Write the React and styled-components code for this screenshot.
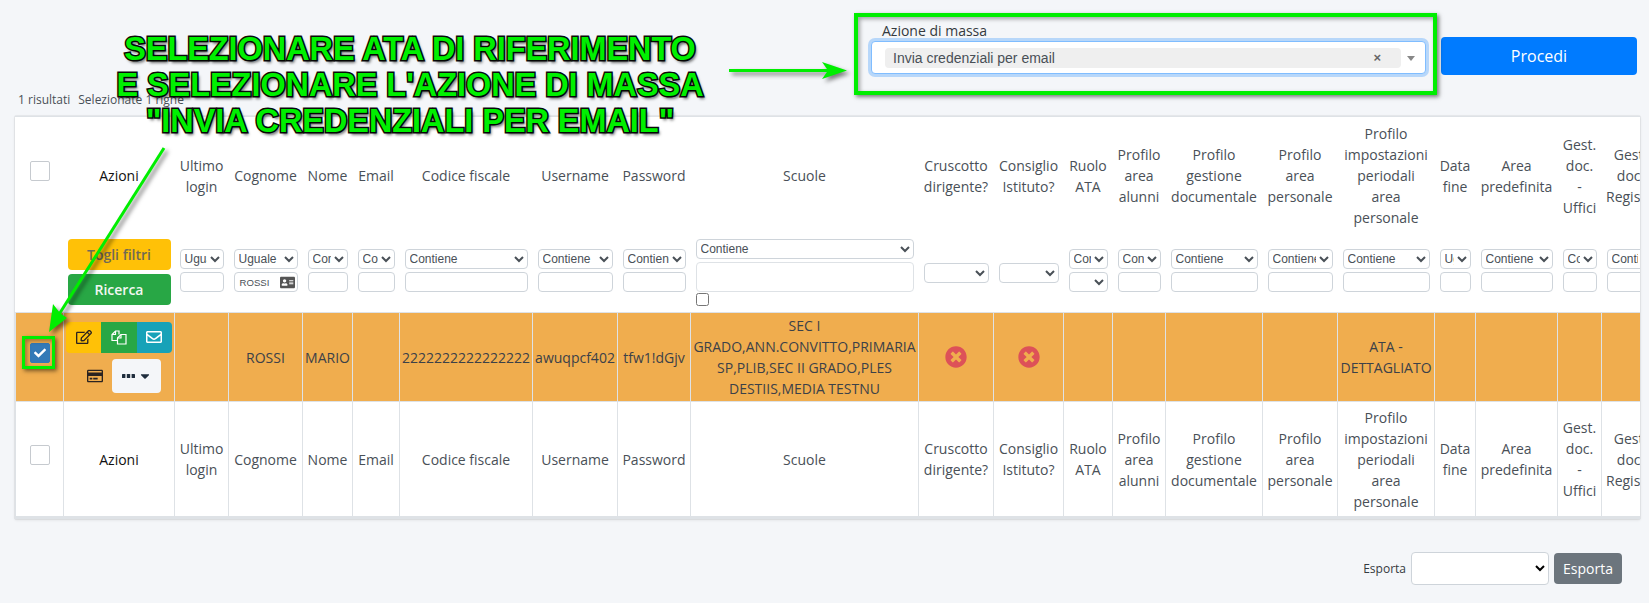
import React from 'react';
import styled, { createGlobalStyle } from 'styled-components';
import {
  FaRegEdit, FaRegEnvelope, FaRegCreditCard, FaCaretDown,
  FaCheck, FaTimesCircle, FaAddressCard,
} from 'react-icons/fa';

const GlobalStyle = createGlobalStyle`
  html, body {
    margin: 0;
    padding: 0;
    background: #f4f6f9;
  }
  body {
    font-family: "Open Sans", "Noto Sans", sans-serif;
    font-size: 14px;
    color: #495057;
  }
`;

const Page = styled.div`
  position: relative;
  width: 1649px;
  height: 603px;
  overflow: hidden;
`;

const MassBar = styled.div`
  display: flex;
  justify-content: flex-end;
  align-items: flex-end;
  gap: 15px;
  padding: 21px 12px 0 0;
`;

const MassField = styled.div`
  width: 555px;
`;

const MassLabel = styled.div`
  margin-left: 11px;
  line-height: 20px;
  color: #343a40;
`;

const MassSelect = styled.div`
  display: flex;
  align-items: center;
  height: 33px;
  box-sizing: border-box;
  padding: 0 10px 0 13px;
  background: #fff;
  border: 1px solid #80bdff;
  border-radius: 4px;
  box-shadow: 0 0 0 3px rgba(0, 123, 255, 0.25);
  font-family: "Liberation Sans", Arial, sans-serif;
  color: #495057;
`;

const Chip = styled.div`
  flex: 1;
  display: flex;
  justify-content: space-between;
  align-items: center;
  height: 20px;
  padding: 0 20px 0 8px;
  background: #efefef;
  border-radius: 4px;
`;

const ChipClose = styled.span`
  font-size: 13px;
  font-weight: 700;
  color: #666;
`;

const SelectCaret = styled.span`
  width: 0;
  height: 0;
  margin: 2px 0 0 6px;
  border-left: 4px solid transparent;
  border-right: 4px solid transparent;
  border-top: 5px solid #888;
`;

const ProceedButton = styled.button`
  width: 196px;
  height: 38px;
  margin-bottom: -1px;
  background: #007bff;
  border: 0;
  border-radius: 4px;
  color: #fff;
  font: 400 16px "Open Sans", sans-serif;
`;

const ResultLine = styled.div`
  display: flex;
  gap: 8px;
  margin: 17px 0 0 18px;
  font-size: 12px;
  line-height: 18px;
  height: 18px;
  color: #495057;
`;

const TableCard = styled.div`
  margin: 7px 9px 0 15px;
  overflow: hidden;
  background: #fff;
  border-top: 1px solid #dee2e6;
  border-bottom: 2px solid #dee2e6;
  box-shadow: 0 0 1px rgba(0, 0, 0, 0.25), 0 1px 3px rgba(0, 0, 0, 0.1);
`;

const Grid = styled.table`
  width: 1644px;
  table-layout: fixed;
  border-collapse: collapse;
`;

const LabelRow = styled.tr`
  height: ${props => props.$height}px;
`;

const FilterRow = styled.tr`
  height: 79px;
`;

const DataRow = styled.tr`
  height: 89px;
  background: #f0ad4e;
`;

const HeadCell = styled.th`
  padding: 0 4px;
  font-weight: 400;
  line-height: 21px;
  text-align: center;
  vertical-align: middle;
  color: ${props => (props.$dark ? '#111' : '#495057')};
  border: 1px solid ${props => (props.$ruled ? '#dee2e6' : 'transparent')};
`;

const FilterCell = styled.td`
  padding: 0 5px 2px;
  vertical-align: middle;
`;

const ActionsFilterCell = styled(FilterCell)`
  padding: 0 4px 2px;
`;

const BodyCell = styled.td`
  padding: 0 2px;
  line-height: 21px;
  text-align: center;
  vertical-align: middle;
  color: #3c4148;
  border: 1px solid #dee2e6;
`;

const FilterStack = styled.div`
  display: flex;
  flex-direction: column;
  gap: ${props => props.$gap || 3}px;
`;

const PairStack = styled(FilterStack)`
  margin-bottom: 3px;
`;

const FilterSelect = styled.select`
  width: 100%;
  height: 20px;
  padding: 0;
  box-sizing: border-box;
  background: #fff;
  border: 1px solid #ced4da;
  border-radius: 4px;
  font: 12px "Liberation Sans", Arial, sans-serif;
  color: #495057;
`;

const FilterInput = styled.input`
  display: block;
  width: 100%;
  height: 20px;
  padding: 0 4px;
  box-sizing: border-box;
  background: #fff;
  border: 1px solid #ced4da;
  border-radius: 4px;
`;

const FilterBox = styled.div`
  display: flex;
  align-items: center;
  justify-content: space-between;
  height: 20px;
  padding: 0 2px 0 5px;
  box-sizing: border-box;
  background: #fff;
  border: 1px solid #ced4da;
  border-radius: 4px;
  font: 9.6px "Liberation Sans", Arial, sans-serif;
  color: #495057;
  svg {
    font-size: 15px;
    color: #555;
  }
`;

const FilterArea = styled.div`
  height: 30px;
  background: #fff;
  border: 1px solid #dee2e6;
  border-radius: 4px;
  box-sizing: border-box;
`;

const TinyCheck = styled.input`
  display: block;
  width: 13px;
  height: 13px;
  margin: -2px 0 0;
`;

const FilterButton = styled.button`
  display: block;
  width: 100%;
  height: 31px;
  padding: 0;
  background: ${props => props.$bg};
  border: 0;
  border-radius: 4px;
  color: ${props => props.$fg};
  font: 600 14px "Open Sans", sans-serif;
`;

const BigCheck = styled.span`
  display: inline-flex;
  align-items: center;
  justify-content: center;
  width: 20px;
  height: 20px;
  margin-bottom: 9px;
  box-sizing: border-box;
  vertical-align: middle;
  background: ${props => (props.$checked ? '#337ab7' : '#fff')};
  border: 1px solid ${props => (props.$checked ? '#337ab7' : '#c6cacf')};
  border-radius: 2px;
  color: #fff;
  font-size: 12px;
`;

const ActionsBox = styled.div`
  display: flex;
  flex-direction: column;
  align-items: center;
  margin: 0 -1px;
  row-gap: 6px;
`;

const ActionGroup = styled.div`
  display: flex;
  width: 106px;
  height: 31px;
  border-radius: 4px;
  overflow: hidden;
`;

const ActionButton = styled.span`
  flex: 1;
  display: flex;
  align-items: center;
  justify-content: center;
  background: ${props => props.$bg};
  color: ${props => props.$fg};
  font-size: 16px;
`;

const MoreRow = styled.div`
  display: flex;
  align-items: center;
  padding-left: 10px;
`;

const CardIcon = styled.span`
  display: flex;
  margin-right: 9px;
  font-size: 16px;
  color: #2b2320;
`;

const MoreButton = styled.span`
  display: flex;
  align-items: center;
  justify-content: center;
  gap: 3px;
  width: 49px;
  height: 34px;
  background: #f4f6f9;
  border-radius: 4px;
  color: #1f2d3d;
  svg:last-child {
    font-size: 14px;
  }
`;

const StatusIcon = styled.span`
  display: flex;
  justify-content: center;
  font-size: 22px;
  color: #dd5158;
`;

const ExportBar = styled.div`
  display: flex;
  justify-content: flex-end;
  align-items: center;
  gap: 5px;
  margin-top: 33px;
  padding-right: 27px;
`;

const ExportLabel = styled.span`
  font-size: 12px;
  color: #343a40;
`;

const ExportSelect = styled.select`
  width: 138px;
  height: 33px;
  background: #fff;
  border: 1px solid #ced4da;
  border-radius: 4px;
`;

const ExportButton = styled.button`
  width: 68px;
  height: 31px;
  background: #6c757d;
  border: 0;
  border-radius: 4px;
  color: #fff;
  font: 400 14px "Open Sans", sans-serif;
`;

/* annotations pasted on top of the screenshot */
const Callout = styled.div`
  position: absolute;
  left: 60px;
  top: 31px;
  width: 700px;
  font: 700 32.4px/36px "Liberation Sans", Arial, sans-serif;
  text-align: center;
  color: #00f000;
  -webkit-text-stroke: 3px #0a0a0a;
  paint-order: stroke fill;
  text-shadow: 2px 3px 3px rgba(0, 0, 0, 0.55);
`;

const GreenFrame = styled.div`
  position: absolute;
  left: ${props => props.$x}px;
  top: ${props => props.$y}px;
  width: ${props => props.$w}px;
  height: ${props => props.$h}px;
  box-sizing: border-box;
  border: ${props => props.$line}px solid #00ee00;
  box-shadow: 2px 2px 4px rgba(0, 0, 0, 0.5), inset 2px 2px 4px rgba(0, 0, 0, 0.35);
`;

const ArrowLayer = styled.svg`
  position: absolute;
  left: 0;
  top: 0;
  pointer-events: none;
  filter: drop-shadow(3px 3px 2px rgba(0, 0, 0, 0.5));
`;

const FilesIcon = () => (
  <svg width="16" height="16" viewBox="0 0 16 16" fill="none" stroke="currentColor" strokeWidth="1.2">
    <path d="M6.5 11.5H1V5.5L4.5 2H8V5.5" />
    <path d="M4.5 2V5.5H1" />
    <path d="M6.5 9L10 5.5H15V15H6.5Z" />
    <path d="M10 5.5V9H6.5" />
  </svg>
);

const DotsIcon = () => (
  <svg width="13" height="4" viewBox="0 0 13 4" fill="currentColor">
    <rect x="0" y="0" width="3.4" height="4" rx="0.6" />
    <rect x="4.8" y="0" width="3.4" height="4" rx="0.6" />
    <rect x="9.6" y="0" width="3.4" height="4" rx="0.6" />
  </svg>
);

const columns = [
  { key: 'check', width: 48 },
  { key: 'actions', width: 111, label: 'Azioni', dark: true },
  { key: 'login', width: 54, label: 'Ultimo login', op: 'Uguale' },
  { key: 'surname', width: 74, label: 'Cognome', op: 'Uguale', value: 'ROSSI' },
  { key: 'name', width: 50, label: 'Nome', value: 'MARIO' },
  { key: 'email', width: 47, label: 'Email' },
  { key: 'cf', width: 133, label: 'Codice fiscale', value: '2222222222222222' },
  { key: 'user', width: 85, label: 'Username', value: 'awuqpcf402' },
  { key: 'pass', width: 73, label: 'Password', value: 'tfw1!dGjv' },
  { key: 'schools', width: 228, label: 'Scuole', value: 'SEC I GRADO,ANN.CONVITTO,PRIMARIA SP,PLIB,SEC II GRADO,PLES DESTIIS,MEDIA TESTNU' },
  { key: 'dash', width: 75, label: 'Cruscotto dirigente?', status: true },
  { key: 'board', width: 70, label: 'Consiglio Istituto?', status: true },
  { key: 'role', width: 49, label: 'Ruolo ATA' },
  { key: 'p1', width: 53, label: 'Profilo area alunni' },
  { key: 'p2', width: 97, label: 'Profilo gestione documentale' },
  { key: 'p3', width: 75, label: 'Profilo area personale' },
  { key: 'p4', width: 97, label: 'Profilo impostazioni periodali area personale', value: 'ATA - DETTAGLIATO' },
  { key: 'end', width: 41, label: 'Data fine', op: 'Uguale' },
  { key: 'area', width: 82, label: 'Area predefinita' },
  { key: 'g1', width: 44, label: 'Gest. doc. - Uffici' },
  { key: 'g2', width: 58, label: 'Gest. doc. Registro' },
];

const renderFilter = (col) => {
  const op = <FilterSelect defaultValue={col.op || 'Contiene'}>
    <option>Contiene</option>
    <option>Uguale</option>
  </FilterSelect>;

  if (col.key === 'check') {
    return <FilterCell key={col.key} />;
  }
  if (col.key === 'actions') {
    return (
      <ActionsFilterCell key={col.key}>
        <FilterStack $gap={4}>
          <FilterButton $bg="#ffc107" $fg="#6f6a55">Togli filtri</FilterButton>
          <FilterButton $bg="#28a745" $fg="#f2f7f3">Ricerca</FilterButton>
        </FilterStack>
      </ActionsFilterCell>
    );
  }
  if (col.key === 'surname') {
    return (
      <FilterCell key={col.key}>
        <PairStack>{op}<FilterBox>ROSSI<FaAddressCard /></FilterBox></PairStack>
      </FilterCell>
    );
  }
  if (col.key === 'schools') {
    return (
      <FilterCell key={col.key}>
        <FilterStack>{op}<FilterArea /><TinyCheck type="checkbox" /></FilterStack>
      </FilterCell>
    );
  }
  if (col.status) {
    return (
      <FilterCell key={col.key}>
        <FilterSelect><option></option></FilterSelect>
      </FilterCell>
    );
  }
  if (col.key === 'role') {
    return (
      <FilterCell key={col.key}>
        <PairStack>{op}<FilterSelect><option></option></FilterSelect></PairStack>
      </FilterCell>
    );
  }
  return (
    <FilterCell key={col.key}>
      <PairStack>{op}<FilterInput /></PairStack>
    </FilterCell>
  );
};

const renderBody = (col) => {
  if (col.key === 'check') {
    return <BodyCell key={col.key}><BigCheck $checked><FaCheck /></BigCheck></BodyCell>;
  }
  if (col.key === 'actions') {
    return (
      <BodyCell key={col.key}>
        <ActionsBox>
          <ActionGroup>
            <ActionButton $bg="#ffc107" $fg="#2b2320"><FaRegEdit /></ActionButton>
            <ActionButton $bg="#28a745" $fg="#fff"><FilesIcon /></ActionButton>
            <ActionButton $bg="#17a2b8" $fg="#fff"><FaRegEnvelope /></ActionButton>
          </ActionGroup>
          <MoreRow>
            <CardIcon><FaRegCreditCard /></CardIcon>
            <MoreButton><DotsIcon /><FaCaretDown /></MoreButton>
          </MoreRow>
        </ActionsBox>
      </BodyCell>
    );
  }
  if (col.status) {
    return <BodyCell key={col.key}><StatusIcon><FaTimesCircle /></StatusIcon></BodyCell>;
  }
  return <BodyCell key={col.key}>{col.value}</BodyCell>;
};

const renderLabels = (ruled) => columns.map((col) => (
  <HeadCell key={col.key} $dark={col.dark} $ruled={ruled}>
    {col.key === 'check' ? <BigCheck /> : col.label}
  </HeadCell>
));

export default function App() {
  return (
    <Page>
      <GlobalStyle />
      <MassBar>
        <MassField>
          <MassLabel>Azione di massa</MassLabel>
          <MassSelect>
            <Chip>Invia credenziali per email<ChipClose>×</ChipClose></Chip>
            <SelectCaret />
          </MassSelect>
        </MassField>
        <ProceedButton>Procedi</ProceedButton>
      </MassBar>

      <ResultLine><span>1 risultati</span><span>Selezionate 1 righe</span></ResultLine>

      <TableCard>
        <Grid>
          <colgroup>
            {columns.map((col) => <col key={col.key} width={col.width} />)}
          </colgroup>
          <thead>
            <LabelRow $height={116}>{renderLabels(false)}</LabelRow>
            <FilterRow>{columns.map(renderFilter)}</FilterRow>
          </thead>
          <tbody>
            <DataRow>{columns.map(renderBody)}</DataRow>
          </tbody>
          <tfoot>
            <LabelRow $height={115}>{renderLabels(true)}</LabelRow>
          </tfoot>
        </Grid>
      </TableCard>

      <ExportBar>
        <ExportLabel>Esporta</ExportLabel>
        <ExportSelect><option></option></ExportSelect>
        <ExportButton>Esporta</ExportButton>
      </ExportBar>

      <Callout>
        SELEZIONARE ATA DI RIFERIMENTO<br />
        E SELEZIONARE L'AZIONE DI MASSA<br />
        "INVIA CREDENZIALI PER EMAIL"
      </Callout>
      <GreenFrame $x={854} $y={13} $w={583} $h={82} $line={4} />
      <GreenFrame $x={22} $y={336} $w={33} $h={33} $line={3} />
      <ArrowLayer width="1649" height="603" viewBox="0 0 1649 603">
        <line x1="729" y1="70.5" x2="835" y2="70.5" stroke="#00ee00" strokeWidth="3" />
        <polygon points="847,70.5 822,62 828,70.5 822,79" fill="#00ee00" />
        <line x1="164" y1="148" x2="58" y2="316" stroke="#00ee00" strokeWidth="3" />
        <polygon points="49,332 53,304 60,313 67,318" fill="#00ee00" />
      </ArrowLayer>
    </Page>
  );
}
